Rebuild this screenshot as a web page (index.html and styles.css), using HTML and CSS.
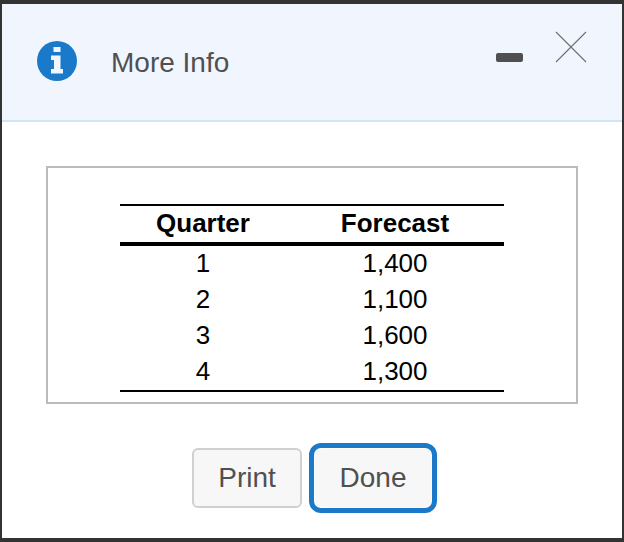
FILE: index.html
```html
<!DOCTYPE html>
<html lang="en">
<head>
<meta charset="utf-8">
<title>More Info</title>
<link rel="stylesheet" href="styles.css">
</head>
<body>
<div class="dialog">
  <header class="head">
    <svg class="info" viewBox="0 0 40 40" width="40" height="40" aria-hidden="true">
      <circle cx="20" cy="20" r="20" fill="#1a7ac9"/>
      <path fill="#f1f6fe" d="M16.5 6h7v5h-7zM14 14.5h9.5V28H26v4.5H14V28h3v-9h-3z"/>
    </svg>
    <h1 class="title">More Info</h1>
    <div class="controls">
      <span class="minimize"></span>
      <svg class="close" viewBox="0 0 32 32" width="32" height="32" aria-hidden="true">
        <path d="M1 1l30 30M31 1L1 31" stroke="#6f6f6f" stroke-width="1.1" fill="none"/>
      </svg>
    </div>
  </header>
  <main class="body">
    <section class="panel">
      <table class="data">
        <thead>
          <tr><th class="c1">Quarter</th><th>Forecast</th></tr>
        </thead>
        <tbody>
          <tr><td>1</td><td>1,400</td></tr>
          <tr><td>2</td><td>1,100</td></tr>
          <tr><td>3</td><td>1,600</td></tr>
          <tr><td>4</td><td>1,300</td></tr>
        </tbody>
      </table>
    </section>
    <div class="actions">
      <button class="btn" type="button">Print</button>
      <button class="btn btn-focus" type="button">Done</button>
    </div>
  </main>
</div>
</body>
</html>
```
FILE: styles.css
```css
* { box-sizing: border-box; }
html, body { margin: 0; height: 100%; }
body {
  background: #333;
  padding: 4px 2px 4px 2px;
  font-family: "Liberation Sans", Arial, sans-serif;
  overflow: hidden;
}
.dialog {
  height: 534px;
  background: #fff;
  display: flex;
  flex-direction: column;
}
.head {
  height: 118px;
  flex: none;
  background: #f1f6fe;
  border-bottom: 2px solid #cfe6f7;
  display: flex;
  align-items: center;
  padding: 0 0 0 35px;
  position: relative;
}
.info { flex: none; margin-top: -2px; }
.title {
  margin: 1px 0 0 34px;
  font-size: 28px;
  font-weight: 400;
  color: #505050;
}
.controls { position: absolute; top: 0; left: 0; right: 0; }
.minimize {
  position: absolute;
  left: 494px;
  top: 49px;
  width: 27px;
  height: 9px;
  border-radius: 2px;
  background: #505050;
}
.close { position: absolute; left: 553px; top: 27px; }
.body {
  flex: 1;
  padding: 44px 44px 0;
}
.panel {
  height: 238px;
  border: 2px solid #bbb;
  padding: 36px 72px 0;
}
.data {
  width: 384px;
  table-layout: fixed;
  border-collapse: separate;
  border-spacing: 0;
  color: #000;
  font-size: 26px;
  text-align: center;
}
.data th {
  height: 42px;
  padding: 0 0 2px;
  font-weight: 700;
  border-top: 2px solid #000;
  border-bottom: 4px solid #000;
}
.data .c1 { width: 166px; }
.data td { height: 36px; padding: 0 0 1px; line-height: 35px; }
.data tbody tr:last-child td { border-bottom: 2px solid #000; height: 38px; }
.actions {
  display: flex;
  justify-content: center;
  align-items: center;
  gap: 11px;
  margin-top: 43px;
  padding-left: 1px;
}
.btn {
  width: 110px;
  height: 60px;
  border: 2px solid #d0d0d0;
  border-radius: 6px;
  background: #f7f7f7;
  color: #505050;
  font: 400 28px "Liberation Sans", Arial, sans-serif;
  padding: 0;
}
.btn-focus {
  width: 120px;
  height: 62px;
  border: 2px solid #fff;
  outline: 5px solid #1a7ac9;
  outline-offset: -1px;
  border-radius: 8px;
}
```
